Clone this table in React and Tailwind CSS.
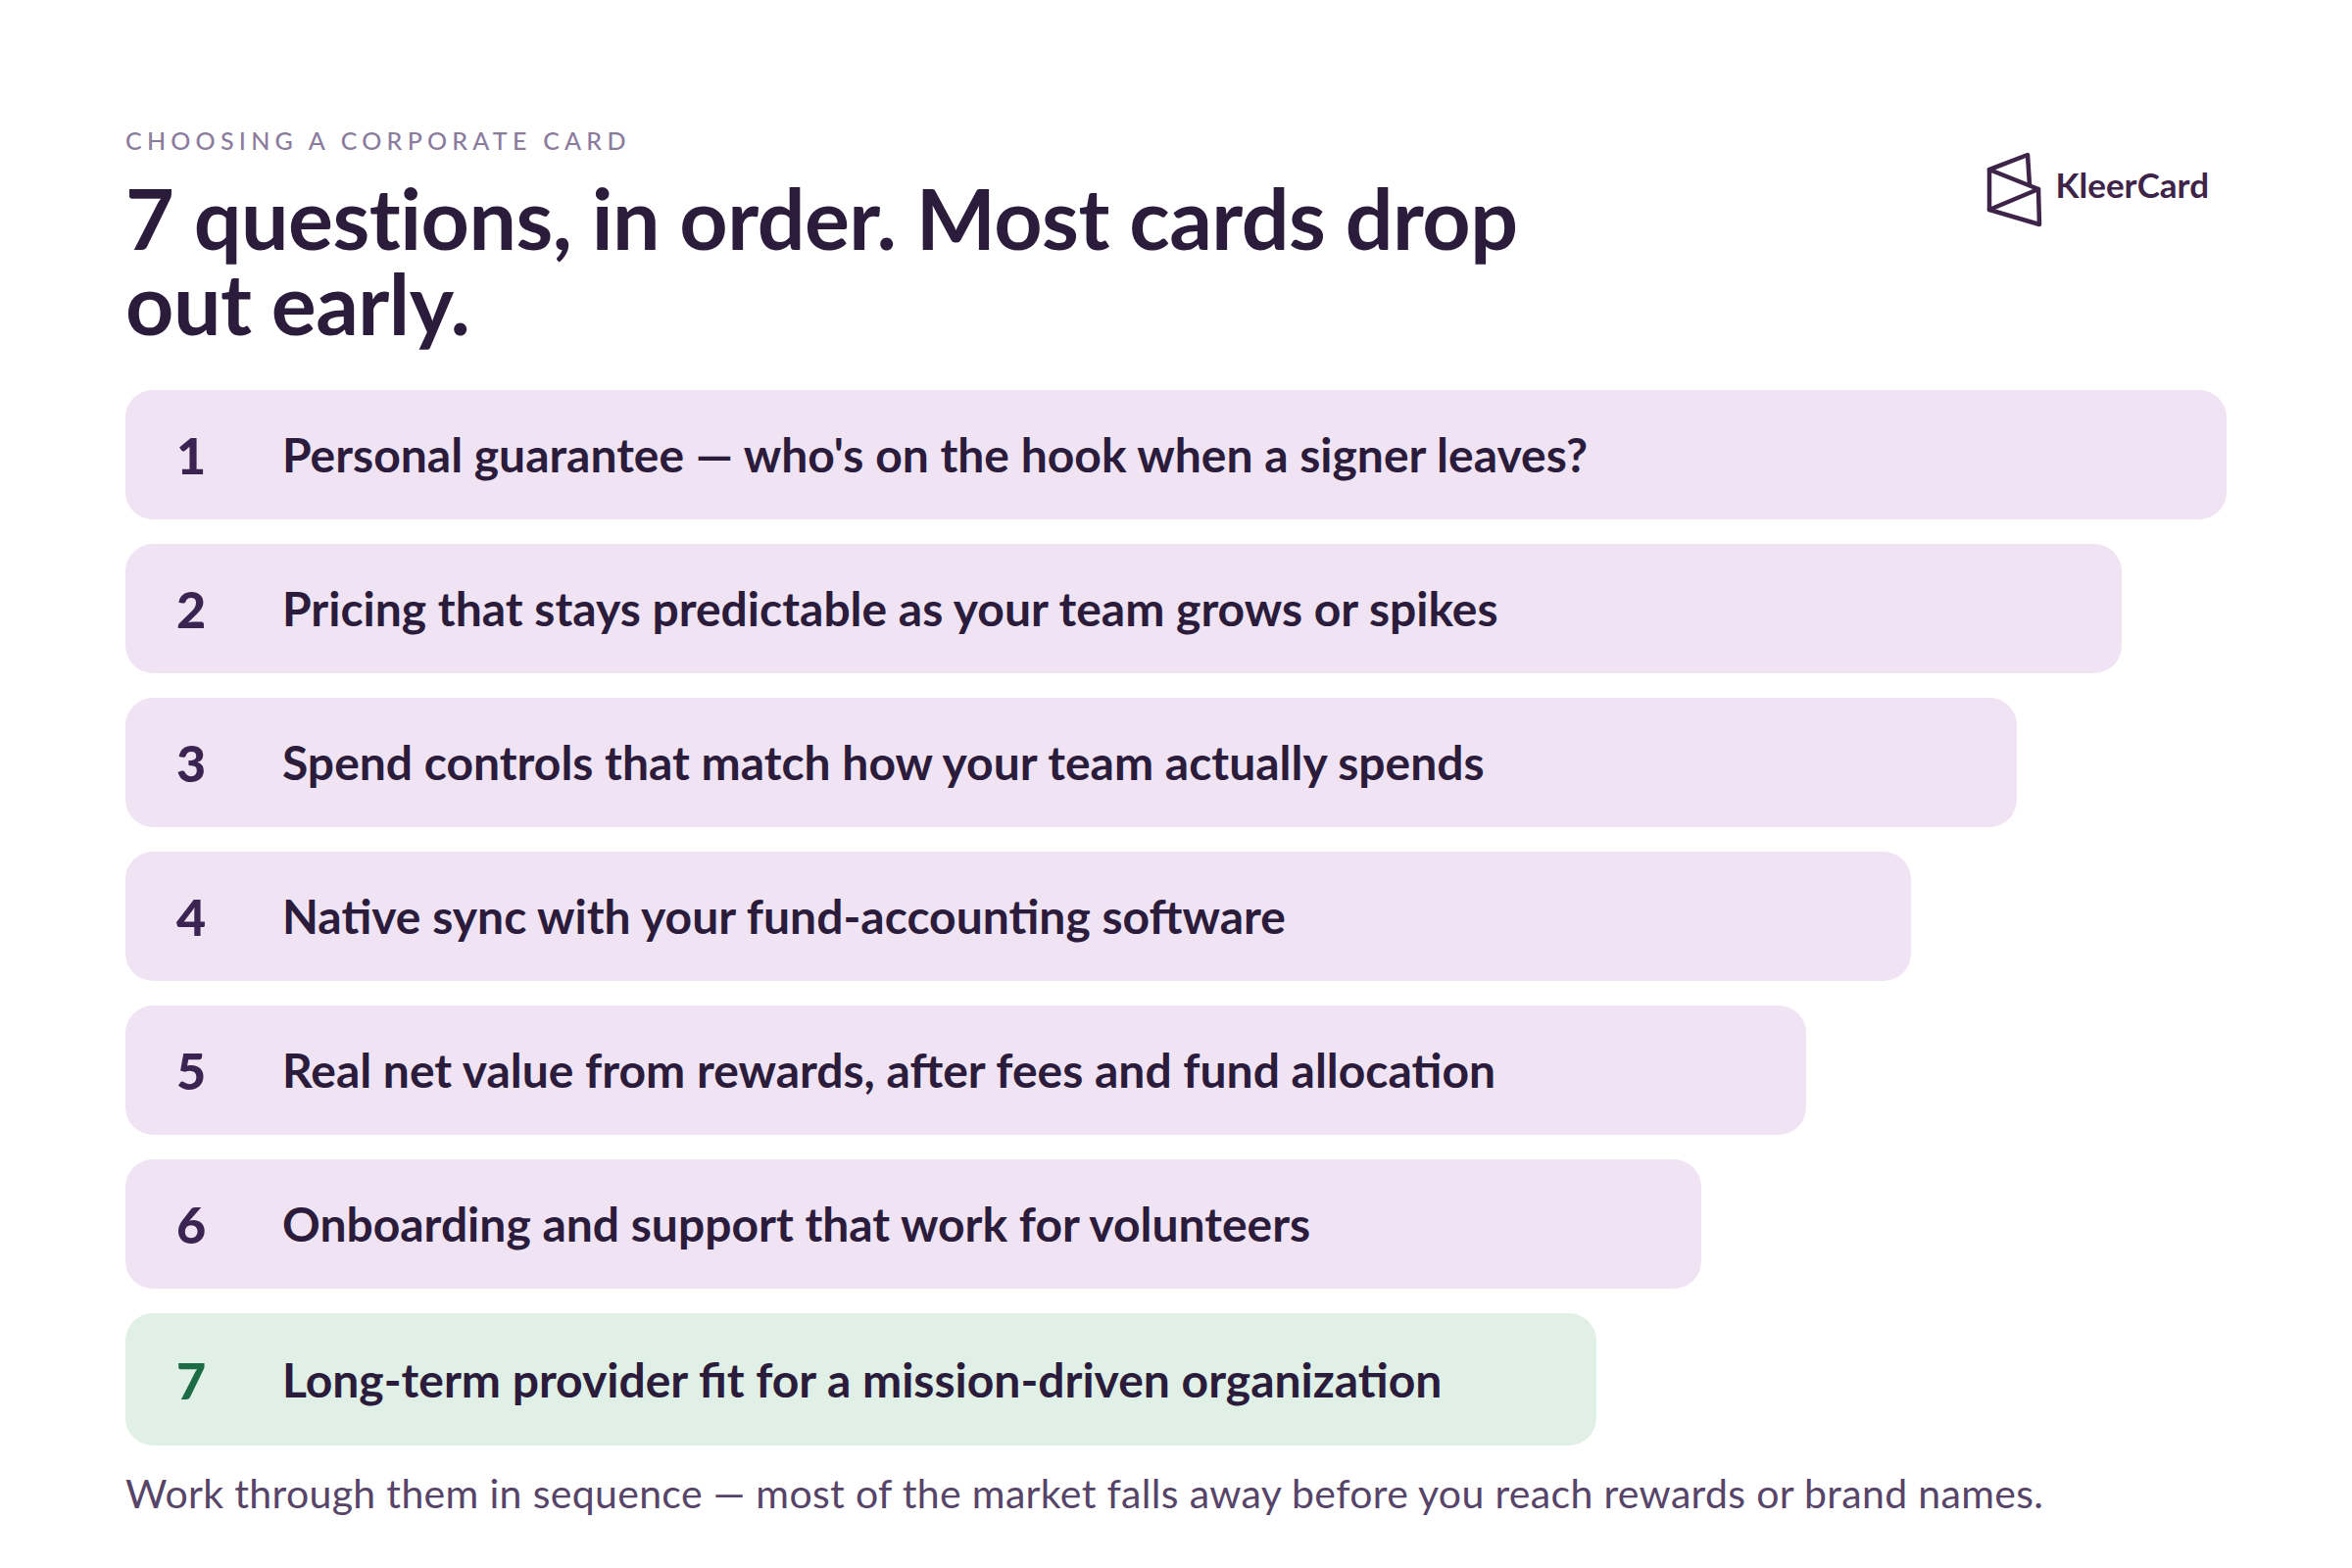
const questions = [
  { n: "1", text: "Personal guarantee — who's on the hook when a signer leaves?", width: "w-full" },
  { n: "2", text: "Pricing that stays predictable as your team grows or spikes", width: "w-[95%]" },
  { n: "3", text: "Spend controls that match how your team actually spends", width: "w-[90%]" },
  { n: "4", text: "Native sync with your fund-accounting software", width: "w-[85%]" },
  { n: "5", text: "Real net value from rewards, after fees and fund allocation", width: "w-[80%]" },
  { n: "6", text: "Onboarding and support that work for volunteers", width: "w-[75%]" },
  { n: "7", text: "Long-term provider fit for a mission-driven organization", width: "w-[70%]", final: true },
];

function Logo() {
  return (
    <div className="flex items-center gap-[12px] pr-[18px] pt-[23px]">
      <svg viewBox="0 0 60 80" className="w-[60px] h-[80px]" fill="none" stroke="#3d2448" strokeWidth="4.5" strokeLinejoin="round" strokeLinecap="round">
        <path d="M4 19 L43 4 L45 35" />
        <path d="M4 19 L54 39 L55 75 L4 60 Z" />
        <path d="M4 60 L54 39" />
      </svg>
      <span className="text-[35px] font-bold text-[#3d2448] leading-none -mt-[12px]">KleerCard</span>
    </div>
  );
}

function QuestionRow({ q }) {
  return (
    <div
      className={`${q.width} rounded-[28px] flex items-center pl-[52px] ${
        q.final ? "bg-[#e0f0e6] h-[135px]" : "bg-[#f0e4f4] h-[132px]"
      }`}
    >
      <span
        className={`w-[108px] shrink-0 text-[52px] font-black leading-none ${
          q.final ? "text-[#1b6b45]" : "text-[#3b2451]"
        }`}
      >
        {q.n}
      </span>
      <span className="text-[48px] font-bold text-[#2b1c3b] leading-none">{q.text}</span>
    </div>
  );
}

export default function App() {
  return (
    <div className="w-[2400px] h-[1600px] bg-white font-['Lato','Liberation_Sans',sans-serif] px-[128px] pt-[131px]">
      <div className="flex justify-between items-start">
        <div>
          <p className="text-[25px] font-medium leading-none tracking-[0.21em] uppercase text-[#8b7b9d]">
            Choosing a corporate card
          </p>
          <h1 className="mt-[22px] text-[86px] leading-[87px] font-bold text-[#2b1c3b] tracking-[-0.006em]">
            7 questions, in order. Most cards drop
            <br />
            out early.
          </h1>
        </div>
        <Logo />
      </div>

      <div className="mt-[46px] flex flex-col gap-[25px]">
        {questions.map((q) => (
          <QuestionRow key={q.n} q={q} />
        ))}
      </div>

      <p className="mt-[28px] text-[41px] leading-none tracking-[0.008em] text-[#574569]">
        Work through them in sequence — most of the market falls away before you reach rewards or brand names.
      </p>
    </div>
  );
}
